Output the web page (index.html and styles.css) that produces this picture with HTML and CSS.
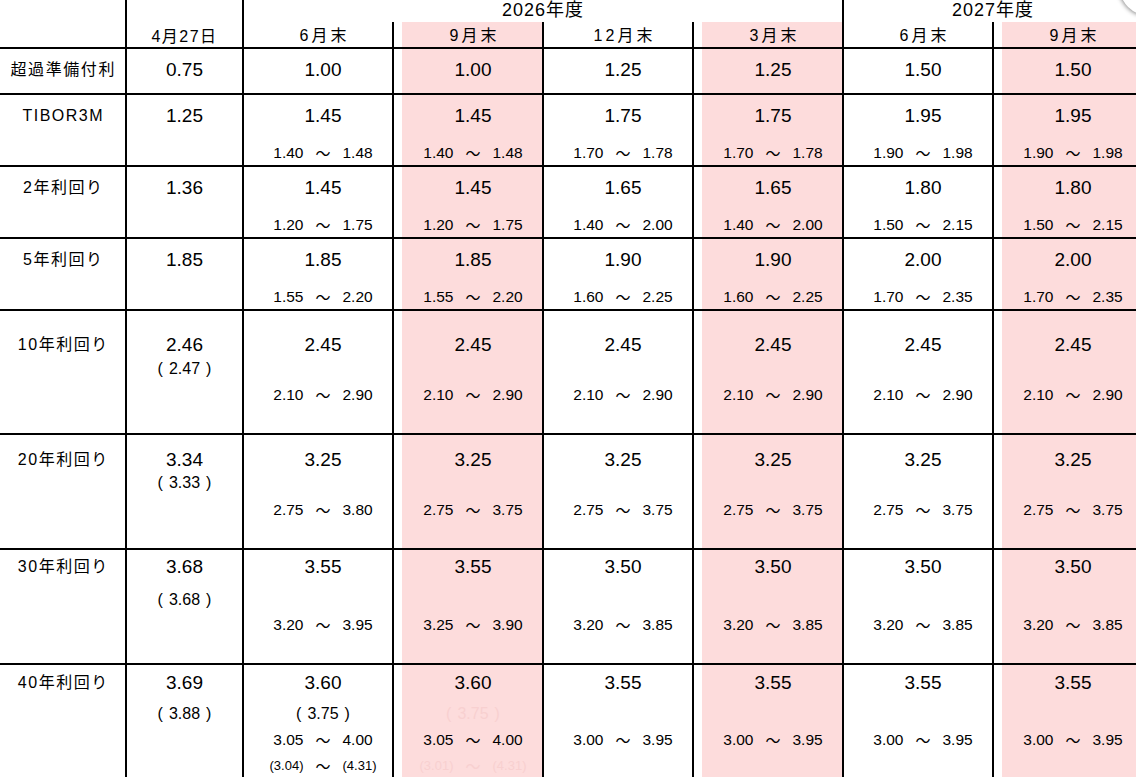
FILE: index.html
```html
<!DOCTYPE html>
<html lang="ja">
<head>
<meta charset="utf-8">
<title>金利見通し</title>
<link rel="stylesheet" href="styles.css">
</head>
<body>
<div class="sheet">
  <div class="row hd">
    <div class="hd-label"></div>
    <div class="hd-date">4月27日</div>
    <div class="year y2026">2026年度</div>
    <div class="year y2027">2027年度</div>
    <div class="month">6月末</div>
    <div class="month pk">9月末</div>
    <div class="month">12月末</div>
    <div class="month pk">3月末</div>
    <div class="month">6月末</div>
    <div class="month pk">9月末</div>
  </div>

  <div class="row r1">
    <div class="lab"><div class="lt wide">超過準備付利</div></div>
    <div class="dt"><div class="main">0.75</div></div>
    <div class="c"><div class="main">1.00</div></div>
    <div class="c pk"><div class="main">1.00</div></div>
    <div class="c"><div class="main">1.25</div></div>
    <div class="c pk"><div class="main">1.25</div></div>
    <div class="c"><div class="main">1.50</div></div>
    <div class="c pk"><div class="main">1.50</div></div>
  </div>

  <div class="row r2">
    <div class="lab"><div class="lt">TIBOR3M</div></div>
    <div class="dt"><div class="main">1.25</div></div>
    <div class="c"><div class="main">1.45</div><div class="range"><span>1.40</span><span class="tl">～</span><span>1.48</span></div></div>
    <div class="c pk"><div class="main">1.45</div><div class="range"><span>1.40</span><span class="tl">～</span><span>1.48</span></div></div>
    <div class="c"><div class="main">1.75</div><div class="range"><span>1.70</span><span class="tl">～</span><span>1.78</span></div></div>
    <div class="c pk"><div class="main">1.75</div><div class="range"><span>1.70</span><span class="tl">～</span><span>1.78</span></div></div>
    <div class="c"><div class="main">1.95</div><div class="range"><span>1.90</span><span class="tl">～</span><span>1.98</span></div></div>
    <div class="c pk"><div class="main">1.95</div><div class="range"><span>1.90</span><span class="tl">～</span><span>1.98</span></div></div>
  </div>

  <div class="row r3">
    <div class="lab"><div class="lt">2年利回り</div></div>
    <div class="dt"><div class="main">1.36</div></div>
    <div class="c"><div class="main">1.45</div><div class="range"><span>1.20</span><span class="tl">～</span><span>1.75</span></div></div>
    <div class="c pk"><div class="main">1.45</div><div class="range"><span>1.20</span><span class="tl">～</span><span>1.75</span></div></div>
    <div class="c"><div class="main">1.65</div><div class="range"><span>1.40</span><span class="tl">～</span><span>2.00</span></div></div>
    <div class="c pk"><div class="main">1.65</div><div class="range"><span>1.40</span><span class="tl">～</span><span>2.00</span></div></div>
    <div class="c"><div class="main">1.80</div><div class="range"><span>1.50</span><span class="tl">～</span><span>2.15</span></div></div>
    <div class="c pk"><div class="main">1.80</div><div class="range"><span>1.50</span><span class="tl">～</span><span>2.15</span></div></div>
  </div>

  <div class="row r4">
    <div class="lab"><div class="lt">5年利回り</div></div>
    <div class="dt"><div class="main">1.85</div></div>
    <div class="c"><div class="main">1.85</div><div class="range"><span>1.55</span><span class="tl">～</span><span>2.20</span></div></div>
    <div class="c pk"><div class="main">1.85</div><div class="range"><span>1.55</span><span class="tl">～</span><span>2.20</span></div></div>
    <div class="c"><div class="main">1.90</div><div class="range"><span>1.60</span><span class="tl">～</span><span>2.25</span></div></div>
    <div class="c pk"><div class="main">1.90</div><div class="range"><span>1.60</span><span class="tl">～</span><span>2.25</span></div></div>
    <div class="c"><div class="main">2.00</div><div class="range"><span>1.70</span><span class="tl">～</span><span>2.35</span></div></div>
    <div class="c pk"><div class="main">2.00</div><div class="range"><span>1.70</span><span class="tl">～</span><span>2.35</span></div></div>
  </div>

  <div class="row r5">
    <div class="lab"><div class="lt">10年利回り</div></div>
    <div class="dt"><div class="main">2.46</div><div class="sub">(<span>2.47</span>)</div></div>
    <div class="c"><div class="main">2.45</div><div class="range"><span>2.10</span><span class="tl">～</span><span>2.90</span></div></div>
    <div class="c pk"><div class="main">2.45</div><div class="range"><span>2.10</span><span class="tl">～</span><span>2.90</span></div></div>
    <div class="c"><div class="main">2.45</div><div class="range"><span>2.10</span><span class="tl">～</span><span>2.90</span></div></div>
    <div class="c pk"><div class="main">2.45</div><div class="range"><span>2.10</span><span class="tl">～</span><span>2.90</span></div></div>
    <div class="c"><div class="main">2.45</div><div class="range"><span>2.10</span><span class="tl">～</span><span>2.90</span></div></div>
    <div class="c pk"><div class="main">2.45</div><div class="range"><span>2.10</span><span class="tl">～</span><span>2.90</span></div></div>
  </div>

  <div class="row r6">
    <div class="lab"><div class="lt">20年利回り</div></div>
    <div class="dt"><div class="main">3.34</div><div class="sub">(<span>3.33</span>)</div></div>
    <div class="c"><div class="main">3.25</div><div class="range"><span>2.75</span><span class="tl">～</span><span>3.80</span></div></div>
    <div class="c pk"><div class="main">3.25</div><div class="range"><span>2.75</span><span class="tl">～</span><span>3.75</span></div></div>
    <div class="c"><div class="main">3.25</div><div class="range"><span>2.75</span><span class="tl">～</span><span>3.75</span></div></div>
    <div class="c pk"><div class="main">3.25</div><div class="range"><span>2.75</span><span class="tl">～</span><span>3.75</span></div></div>
    <div class="c"><div class="main">3.25</div><div class="range"><span>2.75</span><span class="tl">～</span><span>3.75</span></div></div>
    <div class="c pk"><div class="main">3.25</div><div class="range"><span>2.75</span><span class="tl">～</span><span>3.75</span></div></div>
  </div>

  <div class="row r7">
    <div class="lab"><div class="lt">30年利回り</div></div>
    <div class="dt"><div class="main">3.68</div><div class="sub">(<span>3.68</span>)</div></div>
    <div class="c"><div class="main">3.55</div><div class="range"><span>3.20</span><span class="tl">～</span><span>3.95</span></div></div>
    <div class="c pk"><div class="main">3.55</div><div class="range"><span>3.25</span><span class="tl">～</span><span>3.90</span></div></div>
    <div class="c"><div class="main">3.50</div><div class="range"><span>3.20</span><span class="tl">～</span><span>3.85</span></div></div>
    <div class="c pk"><div class="main">3.50</div><div class="range"><span>3.20</span><span class="tl">～</span><span>3.85</span></div></div>
    <div class="c"><div class="main">3.50</div><div class="range"><span>3.20</span><span class="tl">～</span><span>3.85</span></div></div>
    <div class="c pk"><div class="main">3.50</div><div class="range"><span>3.20</span><span class="tl">～</span><span>3.85</span></div></div>
  </div>

  <div class="row r8">
    <div class="lab"><div class="lt">40年利回り</div></div>
    <div class="dt"><div class="main">3.69</div><div class="sub">(<span>3.88</span>)</div></div>
    <div class="c">
      <div class="main">3.60</div>
      <div class="sub">(<span>3.75</span>)</div>
      <div class="range"><span>3.05</span><span class="tl">～</span><span>4.00</span></div>
      <div class="range2"><span>(3.04)</span><span class="tl">～</span><span>(4.31)</span></div>
    </div>
    <div class="c pk">
      <div class="main">3.60</div>
      <div class="sub faint">(<span>3.75</span>)</div>
      <div class="range"><span>3.05</span><span class="tl">～</span><span>4.00</span></div>
      <div class="range2 faint"><span>(3.01)</span><span class="tl">～</span><span>(4.31)</span></div>
    </div>
    <div class="c"><div class="main">3.55</div><div class="range"><span>3.00</span><span class="tl">～</span><span>3.95</span></div></div>
    <div class="c pk"><div class="main">3.55</div><div class="range"><span>3.00</span><span class="tl">～</span><span>3.95</span></div></div>
    <div class="c"><div class="main">3.55</div><div class="range"><span>3.00</span><span class="tl">～</span><span>3.95</span></div></div>
    <div class="c pk"><div class="main">3.55</div><div class="range"><span>3.00</span><span class="tl">～</span><span>3.95</span></div></div>
  </div>
</div>
<div class="corner"></div>
</body>
</html>
```

FILE: styles.css
```css
html, body {
  margin: 0;
  padding: 0;
  background: #fff;
  overflow: hidden;
}

body {
  font-family: "Liberation Sans", "Noto Sans CJK JP", sans-serif;
  color: #000;
}

.sheet {
  display: grid;
  grid-template-columns: 125px 117px repeat(6, 150px);
  grid-template-rows: 22px 25px 46px 72px 72px 72px 124px 115px 115px 120px;
  width: 1142px;
}

.row {
  display: contents;
}

/* ---------- header ---------- */
.hd-label {
  grid-row: span 2;
}

.hd-date {
  grid-row: span 2;
  border-left: 2px solid #000;
  text-align: center;
  padding-top: 27px;
  font-size: 16px;
  line-height: 20px;
  letter-spacing: 1.5px;
}

.year {
  border-left: 2px solid #000;
  text-align: center;
  font-size: 18px;
  line-height: 20px;
  letter-spacing: 1px;
}

.y2026 {
  grid-column: span 4;
}

.y2027 {
  grid-column: span 2;
}

.month {
  border-left: 2px solid #000;
  padding: 4px 0 0 13px;
  text-align: center;
  font-size: 16px;
  line-height: 20px;
  letter-spacing: 3px;
}

/* ---------- body cells ---------- */
.lab,
.dt,
.c {
  border-top: 2px solid #000;
  display: flex;
  flex-direction: column;
  align-items: center;
}

.dt,
.c {
  border-left: 2px solid #000;
}

.c {
  padding-left: 10px;
}

.pk {
  background: linear-gradient(to right, transparent 8px, #fddcdc 8px);
}

.lt {
  font-size: 16px;
  line-height: 20px;
  letter-spacing: 1.5px;
  padding-left: 1.5px;
}

.lt.wide {
  letter-spacing: 1.6px;
}

.main {
  font-size: 19px;
  line-height: 20px;
}

.sub {
  font-size: 16px;
  line-height: 18px;
}

.sub span {
  margin: 0 6px;
}

.range {
  display: flex;
  justify-content: center;
  align-items: center;
  gap: 12px;
  font-size: 15.5px;
  line-height: 18px;
}

.range2 {
  display: flex;
  justify-content: center;
  align-items: center;
  gap: 12px;
  font-size: 13px;
  line-height: 16px;
}

.tl {
  font-family: "Noto Sans CJK JP", sans-serif;
  font-size: 15px;
}

.faint {
  color: #f8d0d0;
}

/* ---------- per-row vertical rhythm ---------- */
.r1 > div { padding-top: 11px; }

.r2 > div,
.r3 > div,
.r4 > div { padding-top: 11px; }
.r2 .range,
.r3 .range,
.r4 .range { margin-top: 18px; }

.r5 > div { padding-top: 24px; }
.r5 .sub { margin-top: 5px; }
.r5 .range { margin-top: 31px; }

.r6 > div { padding-top: 15px; }
.r6 .sub { margin-top: 4px; }
.r6 .range { margin-top: 31px; }

.r7 > div { padding-top: 7px; }
.r7 .sub { margin-top: 14px; }
.r7 .range { margin-top: 39px; }

.r8 > div { padding-top: 8px; }
.r8 .sub { margin-top: 12px; }
.r8 .range { margin-top: 38px; }
.r8 .sub + .range { margin-top: 8px; }
.r8 .range2 { margin-top: 9px; }

/* ---------- window corner overlay ---------- */
.corner {
  position: absolute;
  top: -46px;
  right: -45px;
  width: 62px;
  height: 62px;
  border-radius: 50%;
  background: #fff;
  box-shadow: 0 0 4px 1px rgba(0, 0, 0, 0.45);
}
```
